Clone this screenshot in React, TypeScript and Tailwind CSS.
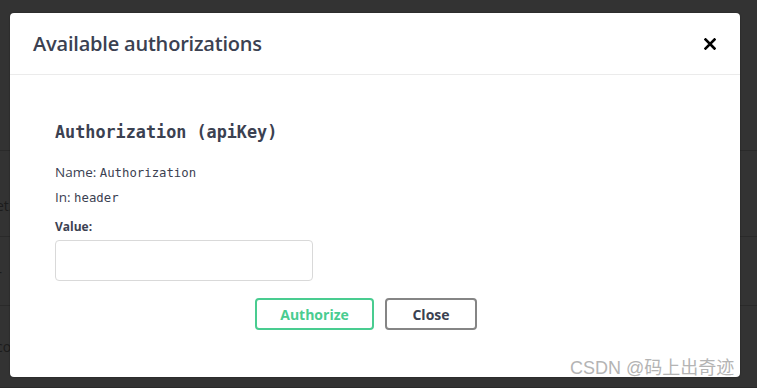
import React, { useState } from "react";

const rows = [
  { h: "h-[151px] pt-0", text: "" },
  { h: "h-[86px] pt-[45px]", text: "et." },
  { h: "h-[69px] pt-[28px]", text: "r" },
  { h: "h-[82px] pt-[31px]", text: "co" },
];

export default function App() {
  const [value, setValue] = useState("");

  return (
    <div className="relative h-[388px] w-[757px] overflow-hidden bg-[#333333] font-['Open_Sans',sans-serif]">
      {/* page behind the dimmed overlay */}
      <div className="flex flex-col">
        {rows.map((r, i) => (
          <div
            key={i}
            className={`${r.h} flex items-start border-b border-[#2a2a2a] text-[14px] leading-[20px] text-[#1c1c1c]`}
          >
            <span className="-ml-[4px]">{r.text}</span>
          </div>
        ))}
      </div>

      {/* modal */}
      <div className="absolute left-[10px] top-[13px] flex h-[364px] w-[730px] flex-col rounded-[4px] bg-white shadow-[0_0_2px_rgba(0,0,0,0.4)]">
        <div className="flex h-[62px] items-center justify-between border-b border-[#ebebeb] pl-[23px] pr-[22px]">
          <h3 className="text-[20px] font-semibold leading-none tracking-[-0.2px] text-[#3b4151]">
            Available authorizations
          </h3>
          <button className="flex h-[16px] w-[16px] items-center justify-center" aria-label="Close">
            <svg width="12" height="12" viewBox="0 0 12 12">
              <path d="M1.5 1.5 L10.5 10.5 M10.5 1.5 L1.5 10.5" stroke="#000" strokeWidth="2.6" strokeLinecap="square" />
            </svg>
          </button>
        </div>

        <div className="flex flex-col pl-[45px] pt-[46px]">
          <h4 className="font-['DejaVu_Sans_Mono',monospace] text-[16.8px] font-bold leading-[22px] text-[#3b4151]">
            Authorization (apiKey)
          </h4>
          <p className="mt-[19px] text-[13.5px] leading-[20px] text-[#3b4151]">
            Name: <code className="font-['DejaVu_Sans_Mono',monospace] text-[12.3px]">Authorization</code>
          </p>
          <p className="mt-[4px] text-[13.5px] leading-[20px] text-[#3b4151]">
            In: <code className="font-['DejaVu_Sans_Mono',monospace] text-[12.3px]">header</code>
          </p>
          <label className="mt-[11px] text-[12px] font-bold leading-[16px] text-[#3b4151]">Value:</label>
          <input
            className="mt-[5px] h-[41px] w-[258px] rounded-[4px] border border-[#d9d9d9] bg-white px-[10px] text-[14px] outline-none"
            value={value}
            onChange={(e) => setValue(e.target.value)}
          />
          <div className="mt-[17px] flex gap-[11px] pl-[200px]">
            <button className="h-[32px] w-[119px] rounded-[4px] border-2 border-[#49cc90] text-[14px] font-bold text-[#49cc90]">
              Authorize
            </button>
            <button className="h-[32px] w-[92px] rounded-[4px] border-2 border-[#858585] text-[14px] font-bold text-[#3b4151]">
              Close
            </button>
          </div>
        </div>
      </div>

      {/* watermark */}
      <div className="absolute left-[570px] top-[356px] font-['Liberation_Sans','Noto_Sans_CJK_SC',sans-serif] text-[18px] leading-[24px] text-[#b4b4b4]">
        CSDN @码上出奇迹
      </div>
    </div>
  );
}
